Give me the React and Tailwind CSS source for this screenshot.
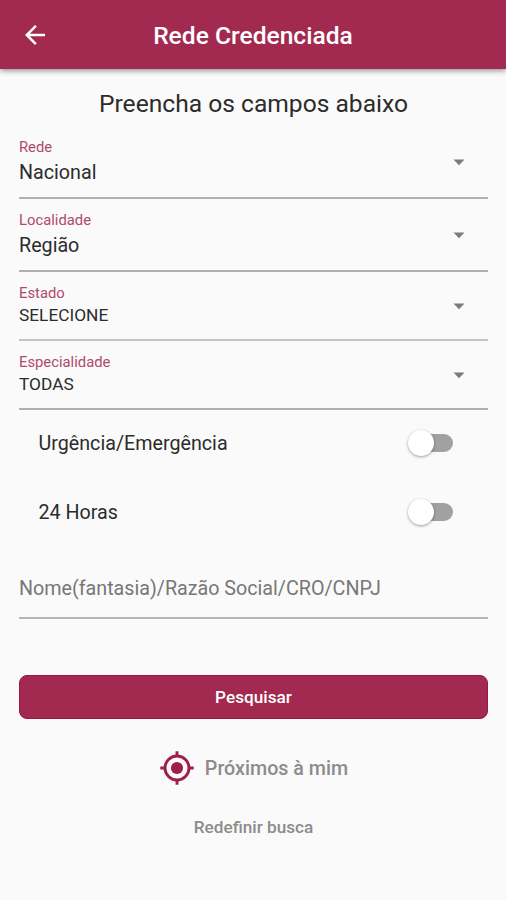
const FIELDS = [
  { label: 'Rede', value: 'Nacional' },
  { label: 'Localidade', value: 'Região' },
  { label: 'Estado', value: 'SELECIONE', compact: true, soft: true },
  { label: 'Especialidade', value: 'TODAS', compact: true },
];

function SelectField({ label, value, compact, soft }) {
  return (
    <div
      className={`flex w-full items-start justify-between border-b-2 pt-3 text-left ${compact ? 'h-[69px]' : 'h-[73px]'} ${soft ? 'border-[#c4c4c4]' : 'border-[#b0b0b0]'}`}
    >
      <div>
        <div className="text-[14.8px] leading-[18px] text-[#b04a6c]">{label}</div>
        <div
          className={`text-[#2c2c2c] ${compact ? 'text-[17.3px] leading-[26px]' : 'pt-[2px] text-[19.7px] leading-[30px]'}`}
        >
          {value}
        </div>
      </div>
      <svg
        className={`mr-[23px] h-[7px] w-3 ${compact ? 'mt-[19px]' : 'mt-[21px]'}`}
        viewBox="0 0 12 7"
        fill="#7b7b7b"
      >
        <path d="M.5.5h11L6 6.3z" />
      </svg>
    </div>
  );
}

function Toggle({ label }) {
  return (
    <div className="flex h-[69px] items-center justify-between pl-[19.5px] pr-[35px] text-[19.7px] text-[#2c2c2c]">
      {label}
      <div className="mb-[2px] flex h-[18px] w-[41px] items-center rounded-full bg-[#a1a1a1]">
        <div className="-ml-1 size-[26px] shrink-0 rounded-full bg-white shadow-[0_1px_3px_rgba(0,0,0,0.38)]" />
      </div>
    </div>
  );
}

function BackArrow() {
  return (
    <svg className="size-[30px]" viewBox="0 0 24 24" fill="currentColor">
      <path d="M20 11H7.83l5.59-5.59L12 4l-8 8 8 8 1.41-1.41L7.83 13H20v-2z" />
    </svg>
  );
}

function LocationIcon() {
  return (
    <svg className="size-[34px]" viewBox="0 0 34 34" fill="none" stroke="#a01f48" strokeWidth="2.9">
      <circle cx="17" cy="17" r="12" />
      <circle cx="17" cy="17" r="6.1" fill="#a01f48" stroke="none" />
      <path d="M17 .3v5M17 28.7v5M.3 17h5M28.7 17h5" />
    </svg>
  );
}

export default function App() {
  return (
    <div className="h-[900px] w-[506px] overflow-hidden bg-[#fafafa] font-[Roboto,sans-serif]">
      <header className="grid h-[69px] grid-cols-[70px_1fr_70px] items-center bg-[#a2294f] pt-px text-white shadow-[0_2px_5px_rgba(0,0,0,0.4)]">
        <button className="pl-5" aria-label="Voltar">
          <BackArrow />
        </button>
        <div className="pt-[2px] text-center text-[24.6px] font-medium">Rede Credenciada</div>
      </header>
      <main className="pl-[19px] pr-[18px]">
        <h1 className="h-[57px] pt-[17px] text-center text-[24.6px] leading-[36px] text-[#2c2c2c]">
          Preencha os campos abaixo
        </h1>
        {FIELDS.map((field) => (
          <SelectField key={field.label} {...field} />
        ))}
        <div className="-mt-px">
          <Toggle label="Urgência/Emergência" />
          <Toggle label="24 Horas" />
        </div>
        <div className="h-[72px] border-b-2 border-[#b5b5b5] pt-[27px] text-[19.7px] leading-[30px] text-[#777]">
          Nome(fantasia)/Razão Social/CRO/CNPJ
        </div>
        <button className="mt-14 block h-[44px] w-full rounded-lg border border-[#9b1643] bg-[#a2294f] pt-[2px] text-[17.2px] font-medium text-white">
          Pesquisar
        </button>
        <div className="mt-8 flex h-[34px] items-center justify-center gap-[11px] pl-px text-[19.7px] font-medium text-[#8c8c8c]">
          <LocationIcon />
          <span className="pt-[2px]">Próximos à mim</span>
        </div>
        <div className="mt-[30px] text-center text-[17.2px] font-medium leading-[24px] text-[#8c8c8c]">
          Redefinir busca
        </div>
      </main>
    </div>
  );
}
